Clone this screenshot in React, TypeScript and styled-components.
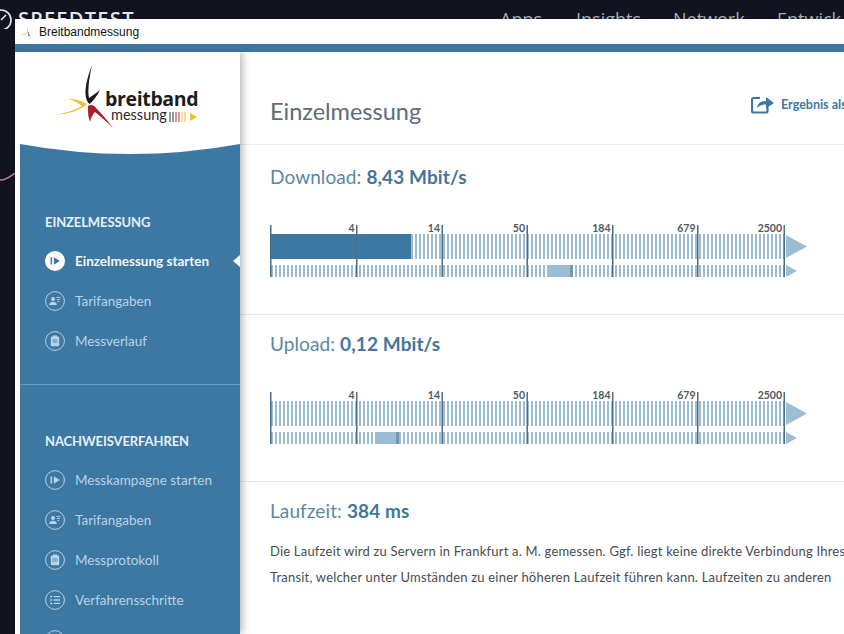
import React from 'react';
import styled, { createGlobalStyle } from 'styled-components';

const BLUE = '#3d78a3';
const FONT = '"Lato", "Open Sans", sans-serif';

const GlobalStyle = createGlobalStyle`
  html, body {
    margin: 0;
    height: 100%;
    overflow: hidden;
    background: #11131f;
  }
  * { box-sizing: border-box; }
`;

const Desktop = styled.div`
  position: relative;
  width: 844px;
  height: 634px;
  overflow: hidden;
  background: #11131f;
  font-family: ${FONT};
`;

const BackHeader = styled.div`
  display: flex;
  align-items: flex-start;
  height: 19px;
  padding-top: 9px;
  color: #e4e6ea;
  font-family: 'Open Sans', sans-serif;
`;

const BackLogo = styled.div`
  display: flex;
  align-items: center;
  gap: 6px;
  width: 500px;
  font-size: 20px;
  font-weight: 600;
  line-height: 20px;
  letter-spacing: 1.3px;
  white-space: nowrap;
`;

const BackNav = styled.div<{ $width: number }>`
  flex: none;
  width: ${(p) => p.$width}px;
  font-size: 18px;
  line-height: 20px;
  color: #a9acb5;
  white-space: nowrap;
`;

const BackCurve = styled.svg`
  position: absolute;
  left: 0;
  top: 163px;
`;

const Window = styled.div`
  position: absolute;
  left: 15px;
  top: 19px;
  right: 0;
  bottom: 0;
  display: flex;
  flex-direction: column;
  overflow: hidden;
  background: #fff;
`;

const TitleBar = styled.div`
  display: flex;
  align-items: center;
  gap: 5px;
  flex: none;
  height: 25px;
  padding: 0 0 0 5px;
  font-family: 'Liberation Sans', sans-serif;
  font-size: 12px;
  color: #111;
`;

const AccentBar = styled.div`
  flex: none;
  height: 8px;
  background: ${BLUE};
`;

const Body = styled.div`
  display: flex;
  flex: 1;
  min-height: 0;
`;

const Sidebar = styled.aside`
  position: relative;
  z-index: 1;
  display: flex;
  flex: none;
  flex-direction: column;
  width: 225px;
  padding-left: 5px;
  box-shadow: 3px 0 7px rgba(60, 70, 80, 0.35);
`;

const LogoArea = styled.div`
  flex: none;
  height: 92px;
`;

const SideCurve = styled.svg`
  display: block;
  flex: none;
`;

const SidePanel = styled.div`
  position: relative;
  flex: 1;
  background: ${BLUE};
`;

const SideGroup = styled.div<{ $top: number; $height: number; $line?: boolean }>`
  height: ${(p) => p.$height}px;
  padding: ${(p) => p.$top}px 0 0 25px;
  border-bottom: ${(p) => (p.$line ? '1px solid #6a9cc0' : 'none')};
`;

const SideHeading = styled.div`
  height: 20px;
  margin-bottom: 9px;
  font-size: 13px;
  font-weight: 700;
  line-height: 20px;
  letter-spacing: -0.1px;
  color: #e6f0f6;
`;

const SideItem = styled.div<{ $active?: boolean }>`
  display: flex;
  align-items: center;
  gap: 10px;
  height: 40px;
  font-size: 13.5px;
  font-weight: ${(p) => (p.$active ? 700 : 400)};
  color: ${(p) => (p.$active ? '#f2f7fa' : '#b7d2e5')};
  white-space: nowrap;
`;

const ActiveCaret = styled.span`
  position: absolute;
  right: 0;
  width: 0;
  height: 0;
  border-top: 6px solid transparent;
  border-bottom: 6px solid transparent;
  border-right: 7px solid #fff;
`;

const Main = styled.main`
  flex: 1;
  min-width: 0;
  overflow: hidden;
`;

const PageHeader = styled.header`
  display: grid;
  grid-template-columns: 481px auto;
  align-items: center;
  height: 93px;
  margin-bottom: 3px;
  padding: 25px 0 0 30px;
  border-bottom: 1px solid #eceeef;
`;

const PageTitle = styled.h1`
  margin: 0;
  font-size: 23.5px;
  font-weight: 400;
  color: #5d6c78;
`;

const ResultLink = styled.div`
  display: flex;
  align-items: center;
  gap: 7px;
  margin-top: -13px;
  font-size: 12.5px;
  font-weight: 700;
  color: ${BLUE};
  white-space: nowrap;
`;

const Section = styled.section<{ $line?: boolean }>`
  padding: 16px 0 ${(p) => (p.$line ? '34px' : '0')} 30px;
  border-bottom: ${(p) => (p.$line ? '1px solid #e6e8ea' : 'none')};
`;

const Measure = styled.h2`
  margin: 0;
  font-size: 19px;
  font-weight: 400;
  line-height: 26px;
  letter-spacing: 0.1px;
  color: #5b87a4;
  white-space: nowrap;

  strong {
    font-weight: 700;
    color: #44759a;
  }
`;

const GaugeBox = styled.svg`
  display: block;
  margin-top: 32px;
`;

const Note = styled.p`
  margin: 0;
  font-size: 13px;
  line-height: 26px;
  letter-spacing: 0.2px;
  color: #474c50;
  white-space: nowrap;

  &:first-of-type {
    margin-top: 14px;
  }
`;

const TICKS = [
  { x: 0.5, label: '' },
  { x: 86.5, label: '4' },
  { x: 172, label: '14' },
  { x: 257, label: '50' },
  { x: 342.5, label: '184' },
  { x: 427.5, label: '679' },
  { x: 514, label: '2500' },
];

const Gauge = ({ id, fill, mark }: { id: string; fill?: number; mark: number }) => (
  <GaugeBox width={540} height={58}>
    <defs>
      <pattern id={id} width={4} height={10} patternUnits="userSpaceOnUse">
        <rect x={1} width={2} height={10} fill="#9cbad0" />
      </pattern>
    </defs>
    <rect x={1} y={12} width={513} height={25} fill={`url(#${id})`} />
    <rect x={1} y={43} width={513} height={12} fill={`url(#${id})`} />
    {fill ? <rect x={0} y={12} width={fill} height={25} fill={BLUE} /> : null}
    <rect x={mark} y={43} width={24} height={12} fill="#9abcd4" />
    <rect x={mark + 21} y={43} width={3} height={12} fill="#7497b1" />
    <path d="M516 13 L537 24.5 L516 36 Z" fill="#9dbdd3" />
    <path d="M516 43 L527 49 L516 55 Z" fill="#9dbdd3" />
    {TICKS.map((t) => (
      <g key={t.x}>
        <rect x={t.x - 0.5} y={3} width={1.5} height={52} fill="#4d6e88" />
        <text
          x={t.x - 2}
          y={10}
          textAnchor="end"
          fontFamily={FONT}
          fontSize={10.5}
          fontWeight={700}
          fill="#4f5a63"
        >
          {t.label}
        </text>
      </g>
    ))}
  </GaugeBox>
);

const Ring = ({ active, children }: { active?: boolean; children: React.ReactNode }) => (
  <svg width={20} height={20} viewBox="0 0 20 20" style={{ flex: 'none' }}>
    <circle
      cx={10}
      cy={10}
      r={active ? 10 : 9.4}
      fill={active ? '#fff' : 'none'}
      stroke={active ? 'none' : '#b7d2e5'}
      strokeWidth={1}
    />
    {children}
  </svg>
);

const StartIcon = ({ active }: { active?: boolean }) => {
  const c = active ? BLUE : '#b7d2e5';
  return (
    <Ring active={active}>
      <rect x={5.6} y={6.4} width={1.5} height={7.2} fill={c} />
      <path d="M8.8 6.2 L14.8 10 L8.8 13.8 Z" fill={c} />
    </Ring>
  );
};

const PersonIcon = () => (
  <Ring>
    <circle cx={8} cy={8} r={2} fill="#b7d2e5" />
    <path d="M4.2 14 C4.4 11.4 6 10.8 8 10.8 C10 10.8 11.6 11.4 11.8 14 Z" fill="#b7d2e5" />
    <path d="M11.4 6.4 H15.6 M11.8 8.5 H15 M12.4 10.6 H14.4" stroke="#b7d2e5" strokeWidth={0.9} />
  </Ring>
);

const ClipIcon = () => (
  <Ring>
    <rect x={5.8} y={5.6} width={8.4} height={9.6} rx={1} fill="#b7d2e5" />
    <rect x={8} y={4.4} width={4} height={2.2} fill="#b7d2e5" />
    <path d="M7.6 9 H12.4 M7.6 11 H12.4" stroke={BLUE} strokeWidth={0.8} />
  </Ring>
);

const StepsIcon = () => (
  <Ring>
    <circle cx={6.2} cy={6.6} r={1} fill="#b7d2e5" />
    <circle cx={6.2} cy={10} r={1} fill="#b7d2e5" />
    <circle cx={6.2} cy={13.4} r={1} fill="#b7d2e5" />
    <path d="M8.6 6.6 H15 M8.6 10 H15 M8.6 13.4 H15" stroke="#b7d2e5" strokeWidth={1.4} />
  </Ring>
);

const LogoMark = () => (
  <svg width={225} height={92} viewBox="0 0 225 92">
    <path d="M72 13 C69 27 67.5 38 69 46 C72 44 76 41 80 38 C77 44 73 49 69.5 52 C67 50 65 45 65.5 38 C66 30 69 21 72 13 Z" fill="#1b1b1d" />
    <path d="M35 63 C46 61 56 58 62 54 C58 51 53 48 48 47 C56 47 62 49 67 52 C62 58 48 62 35 63 Z" fill="#ecc232" />
    <path d="M68 54 C71 52 74 53 76 56 C82 62 88 69 93 76 C86 69 80 64 75 60 C73 62 71 65 70 70 C68 65 68 60 68 54 Z" fill="#ab1f2d" />
    <text x={85} y={54} fontFamily={'"Open Sans", sans-serif'} fontSize={19.5} fontWeight={700} letterSpacing={-0.35} fill="#1c1c1e">
      breitband
    </text>
    <text x={91} y={68} fontFamily={FONT} fontSize={14.5} fill="#2a2a2c">
      messung
    </text>
    <path d="M150 60 V70 M153 60 V70" stroke="#333" strokeWidth={1} />
    <path d="M156 60 V70 M159 60 V70" stroke="#a8323c" strokeWidth={1} />
    <path d="M162 60 V70 M165 60 V70" stroke="#e6bc3a" strokeWidth={1} />
    <path d="M170 61 L177 65 L170 69 Z" fill="#ecc232" />
  </svg>
);

export default function App() {
  return (
    <>
      <GlobalStyle />
      <Desktop>
        <BackHeader>
          <BackLogo>
            <svg width={12} height={20} viewBox="0 0 12 20">
              <circle cx={1} cy={11} r={10} fill="none" stroke="#e4e6ea" strokeWidth={1.6} />
              <path d="M1 11 L6 6" stroke="#e4e6ea" strokeWidth={1.6} />
            </svg>
            SPEEDTEST
          </BackLogo>
          <BackNav $width={76}>Apps</BackNav>
          <BackNav $width={97}>Insights</BackNav>
          <BackNav $width={104}>Network</BackNav>
          <BackNav $width={67}>Entwick</BackNav>
        </BackHeader>
        <BackCurve width={15} height={24} viewBox="0 0 15 24">
          <path d="M0 17 C5 17 10 14 15 10" fill="none" stroke="#b58790" strokeWidth={1.4} />
        </BackCurve>
        <Window>
          <TitleBar>
            <svg width={14} height={14} viewBox="0 0 14 14">
              <path d="M8 2 C7.4 5 7.6 6.6 8.2 8 L9.6 6.6 L8.6 9 C7.4 8 7 5 8 2 Z" fill="#222" />
              <path d="M1 9.6 L6.6 8.6 L4.6 7.4 L7.6 8.8 C5.6 9.8 3 10 1 9.6 Z" fill="#ecc232" />
              <path d="M8 9.4 L8.6 11.4 L9.4 10.6 L11.4 12.4 L9.2 9.4 Z" fill="#ab1f2d" />
            </svg>
            Breitbandmessung
          </TitleBar>
          <AccentBar />
          <Body>
            <Sidebar>
              <LogoArea>
                <LogoMark />
              </LogoArea>
              <SideCurve width={220} height={10} viewBox="0 0 220 10">
                <path d="M0 0 Q110 20 220 0 V10 H0 Z" fill={BLUE} />
              </SideCurve>
              <SidePanel>
                <SideGroup $top={58} $height={231} $line>
                  <SideHeading>EINZELMESSUNG</SideHeading>
                  <SideItem $active>
                    <StartIcon active />
                    Einzelmessung starten
                    <ActiveCaret />
                  </SideItem>
                  <SideItem>
                    <PersonIcon />
                    Tarifangaben
                  </SideItem>
                  <SideItem>
                    <ClipIcon />
                    Messverlauf
                  </SideItem>
                </SideGroup>
                <SideGroup $top={46} $height={260}>
                  <SideHeading>NACHWEISVERFAHREN</SideHeading>
                  <SideItem>
                    <StartIcon />
                    Messkampagne starten
                  </SideItem>
                  <SideItem>
                    <PersonIcon />
                    Tarifangaben
                  </SideItem>
                  <SideItem>
                    <ClipIcon />
                    Messprotokoll
                  </SideItem>
                  <SideItem>
                    <StepsIcon />
                    Verfahrensschritte
                  </SideItem>
                  <SideItem>
                    <Ring>{null}</Ring>
                  </SideItem>
                </SideGroup>
              </SidePanel>
            </Sidebar>
            <Main>
              <PageHeader>
                <PageTitle>Einzelmessung</PageTitle>
                <ResultLink>
                  <svg width={23} height={19} viewBox="0 0 23 19">
                    <path d="M9 3 H2.5 A1.5 1.5 0 0 0 1 4.5 V16 A1.5 1.5 0 0 0 2.5 17.5 H15 A1.5 1.5 0 0 0 16.5 16 V12" fill="none" stroke={BLUE} strokeWidth={2.2} />
                    <path d="M6 13 C7 8 10 6 15 6 V2 L23 8 L15 13.5 V9.6 C11 9.6 8 10.4 6 13 Z" fill={BLUE} />
                  </svg>
                  Ergebnis als
                </ResultLink>
              </PageHeader>
              <Section $line>
                <Measure>
                  Download: <strong>8,43 Mbit/s</strong>
                </Measure>
                <Gauge id="down" fill={141} mark={279} />
              </Section>
              <Section $line>
                <Measure>
                  Upload: <strong>0,12 Mbit/s</strong>
                </Measure>
                <Gauge id="up" mark={105} />
              </Section>
              <Section>
                <Measure>
                  Laufzeit: <strong>384 ms</strong>
                </Measure>
                <Note>Die Laufzeit wird zu Servern in Frankfurt a. M. gemessen. Ggf. liegt keine direkte Verbindung Ihres</Note>
                <Note>Transit, welcher unter Umständen zu einer höheren Laufzeit führen kann. Laufzeiten zu anderen</Note>
              </Section>
            </Main>
          </Body>
        </Window>
      </Desktop>
    </>
  );
}
